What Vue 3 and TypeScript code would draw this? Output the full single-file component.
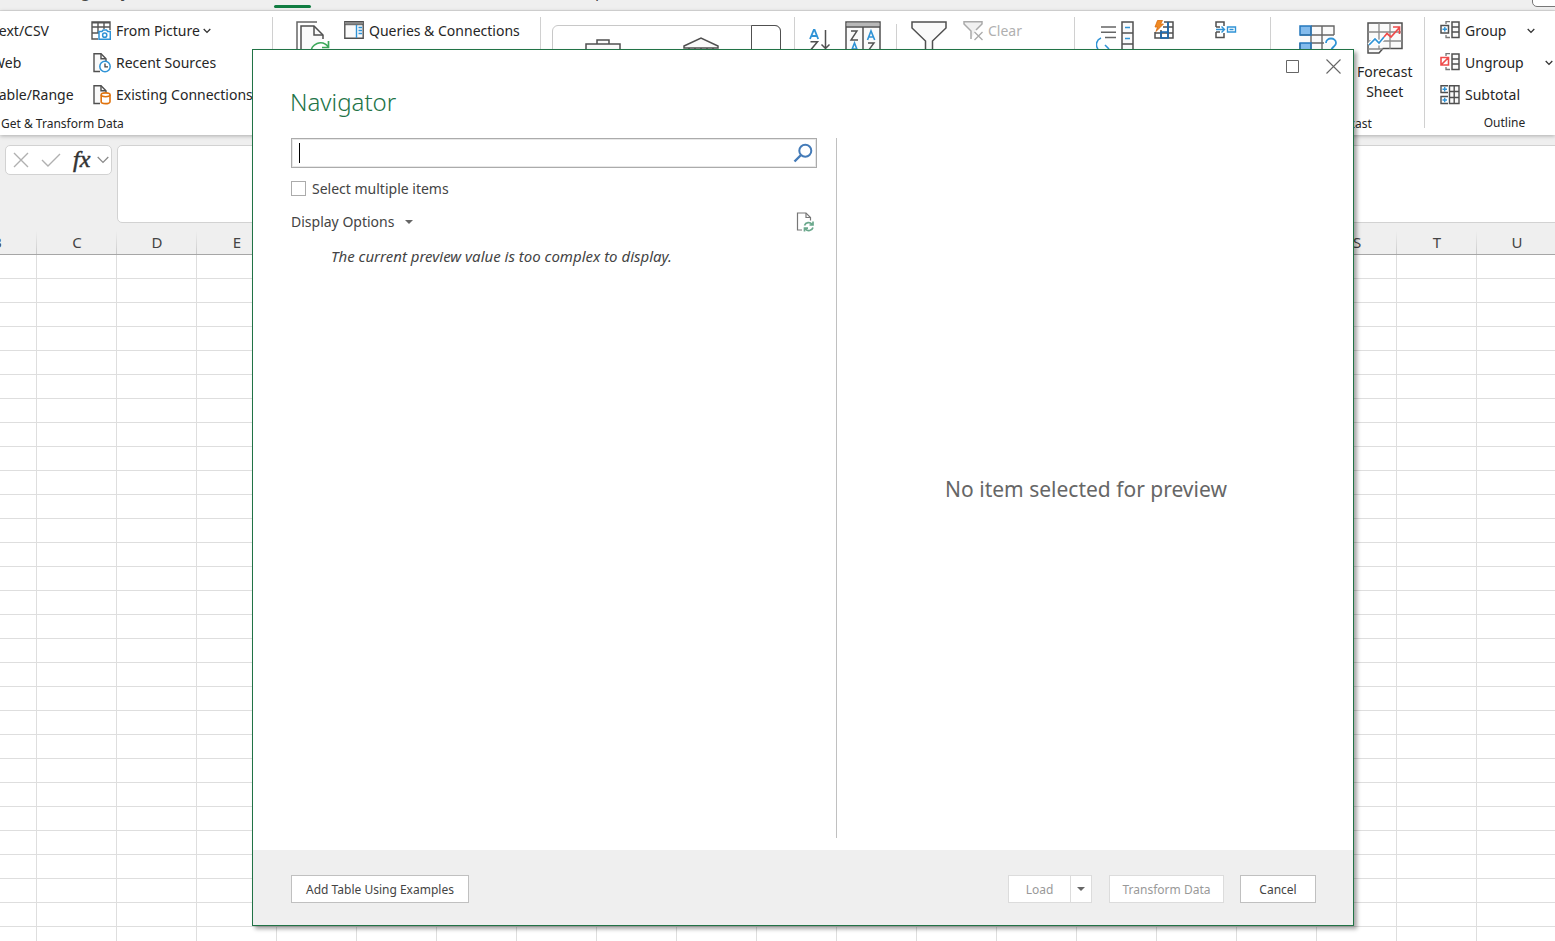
<script setup lang="ts">
import { ref } from 'vue'

const query = ref('')
const multiple = ref(false)
const columns: string[] = 'BCDEFGHIJKLMNOPQRSTU'.split('')
const rowCount = 29
</script>

<template>
  <div class="excel">
    <nav class="tabs" aria-label="Ribbon tabs">
      <a class="tab tab-layout" href="#layout">Page Layout</a>
      <a class="tab-active" href="#data" aria-label="Data"></a>
      <a class="tab tab-help" href="#help">Help</a>
      <button class="comments" type="button" aria-label="Comments"></button>
    </nav>

    <div class="ribbon">
      <section class="group g-get">
        <div class="tools">
          <div class="stack sources">
            <button type="button">Text/CSV</button>
            <button type="button">Web</button>
            <button type="button">Table/Range</button>
          </div>
          <div class="stack">
            <button type="button">
              <svg width="20" height="20" viewBox="0 0 20 20" fill="none">
                <path d="M7 18H1V1H19V9M1 6H19M1 12H8M7 1V12M13 1V8" stroke="#555" stroke-width="1.4" />
                <path d="M1 1.7H19" stroke="#555" stroke-width="1.6" />
                <path d="M8 10.5H11L12.2 9H15.5L16.7 10.5H19.3V18.3H8Z" fill="#fff" stroke="#2f93d6" stroke-width="1.5" />
                <circle cx="13.7" cy="14.2" r="2.1" stroke="#2f93d6" stroke-width="1.5" />
              </svg>
              <span>From Picture</span>
              <svg class="chev" width="8" height="6" viewBox="0 0 8 6" fill="none"><path d="M.7 1L4 4.4L7.3 1" stroke="#333" stroke-width="1.3" /></svg>
            </button>
            <button type="button">
              <svg width="20" height="20" viewBox="0 0 20 20" fill="none">
                <path d="M9 18.5H3V.7H10L15 5.7V8" fill="#fafafa" stroke="#505050" stroke-width="1.4" />
                <path d="M10 .7V5.7H15" stroke="#505050" stroke-width="1.4" />
                <circle cx="14" cy="13.5" r="5.2" fill="#fff" stroke="#2f93d6" stroke-width="1.5" />
                <path d="M14 10.5V13.8H17" stroke="#444" stroke-width="1.3" />
              </svg>
              <span>Recent Sources</span>
            </button>
            <button type="button">
              <svg width="20" height="20" viewBox="0 0 20 20" fill="none">
                <path d="M9 18.5H3V.7H10L15 5.7V8" fill="#fafafa" stroke="#505050" stroke-width="1.4" />
                <path d="M10 .7V5.7H15" stroke="#505050" stroke-width="1.4" />
                <path d="M10.2 9.8V16.8C10.2 19.2 19 19.2 19 16.8V9.8" fill="#fff" stroke="#e0730e" stroke-width="1.6" />
                <ellipse cx="14.6" cy="9.8" rx="4.4" ry="1.9" fill="#fff" stroke="#e0730e" stroke-width="1.6" />
              </svg>
              <span>Existing Connections</span>
            </button>
          </div>
        </div>
        <h2>Get &amp; Transform Data</h2>
      </section>

      <section class="group g-queries">
        <div class="tools">
          <button class="big" type="button" aria-label="Refresh All">
            <svg width="34" height="36" viewBox="0 0 34 36" fill="none">
              <path d="M1 34V1H21" stroke="#666" stroke-width="1.5" />
              <path d="M5 34V5H18L27 14V18" fill="#fafafa" stroke="#505050" stroke-width="1.5" />
              <path d="M18 5V14H27" stroke="#505050" stroke-width="1.5" />
              <path d="M15 32A9.5 9.5 0 0 1 32 25.5M32.5 20V26.5H26" stroke="#3ca85a" stroke-width="1.7" />
            </svg>
          </button>
          <div class="stack">
            <button type="button">
              <svg width="20" height="20" viewBox="0 0 20 20" fill="none">
                <path d="M.8 .8H19.2V17.2H.8Z" fill="#fafafa" stroke="#505050" stroke-width="1.4" />
                <path d="M1 2H19" stroke="#888" stroke-width="2" />
                <path d="M1 3.7H19" stroke="#505050" />
                <path d="M12.5 4V17M14.5 6.5H18M14.5 9.5H18M14.5 12.5H18" stroke="#2f93d6" stroke-width="1.4" />
              </svg>
              <span>Queries &amp; Connections</span>
            </button>
          </div>
        </div>
      </section>

      <section class="group g-types">
        <div class="gallery">
          <button type="button" aria-label="Organization">
            <svg width="36" height="30" viewBox="0 0 36 30" fill="none">
              <path d="M12 5V1H24V5M1 26V5H35V26Z" fill="#fafafa" stroke="#505050" stroke-width="1.5" />
            </svg>
          </button>
          <button class="bank" type="button" aria-label="Stocks">
            <svg width="36" height="30" viewBox="0 0 36 30" fill="none">
              <path d="M1 9L18 1L35 9V11H1Z" fill="#fafafa" stroke="#505050" stroke-width="1.5" />
              <path d="M6 11V26M12 11V26M18 11V26M24 11V26M30 11V26" stroke="#505050" stroke-width="1.5" />
            </svg>
          </button>
          <button class="more" type="button" aria-label="More data types"></button>
        </div>
      </section>

      <section class="group g-sort">
        <div class="tools">
          <button class="big" type="button" aria-label="Sort A to Z">
            <svg width="22" height="36" viewBox="0 0 22 36" fill="none">
              <path d="M1 18L4.8 9H5.6L9.2 18M2.5 15H8" stroke="#2f93d6" stroke-width="1.8" />
              <path d="M1.5 20.8H8.5L1.5 29.2H9" stroke="#505050" stroke-width="1.5" />
              <path d="M16.5 9V27.5M12.5 23.5L16.5 27.5L20.5 23.5" stroke="#505050" stroke-width="1.5" />
            </svg>
          </button>
          <button class="big sort" type="button" aria-label="Sort">
            <svg width="36" height="36" viewBox="0 0 36 36" fill="none">
              <path d="M1 1H35V35H1Z" fill="#fafafa" stroke="#505050" stroke-width="1.5" />
              <path d="M1.7 3.6H34.3" stroke="#b8b8b8" stroke-width="3.6" />
              <path d="M1 6H35M18 6V35" stroke="#505050" stroke-width="1.5" />
              <path d="M6 10H12L6 19H13M23 22H29L23 30H29" stroke="#505050" stroke-width="1.4" />
              <path d="M22.5 19L26 10L29.7 19M23.7 16H28.5M6 31L9.5 22L13 31M7 28H12" stroke="#2f93d6" stroke-width="1.6" />
            </svg>
          </button>
          <i class="rule"></i>
          <button class="big" type="button" aria-label="Filter">
            <svg width="36" height="36" viewBox="0 0 36 36" fill="none">
              <path d="M1 1H35V7L21.5 20V35L14.5 31V20L1 7Z" fill="#fafafa" stroke="#505050" stroke-width="1.5" />
            </svg>
          </button>
          <div class="stack clear">
            <button type="button" disabled>
              <svg width="20" height="20" viewBox="0 0 20 20" fill="none">
                <path d="M8 18V10L1 3V.7H19V3L13 9" fill="#f1f1f1" stroke="#aaa" stroke-width="1.5" />
                <path d="M11.5 11L19.5 19M19.5 11L11.5 19" stroke="#aaa" stroke-width="1.3" />
              </svg>
              <span>Clear</span>
            </button>
          </div>
        </div>
      </section>

      <section class="group g-data">
        <div class="tools">
          <button class="big" type="button" aria-label="Text to Columns">
            <svg width="38" height="36" viewBox="0 0 38 36" fill="none">
              <path d="M5 6H20M5 11.3H20M9 16.5H20" stroke="#666" stroke-width="1.5" />
              <path d="M5 17A7 7 0 0 0 2 28M9 24L13 28" stroke="#2f93d6" stroke-width="1.6" />
              <path d="M26 1H37V35H26ZM26 12H37M26 23H37" fill="#fafafa" stroke="#505050" stroke-width="1.5" />
              <path d="M29 6.5H34M29 17.5H34" stroke="#2f93d6" stroke-width="1.5" />
            </svg>
          </button>
          <button class="mini" type="button" aria-label="Flash Fill">
            <svg width="20" height="20" viewBox="0 0 20 20" fill="none">
              <path d="M10 2H19V18H1V12M1 13H19M9 7H19M7 10V18M14 2V18" stroke="#505050" stroke-width="1.5" />
              <path d="M7 12H14V18H7ZM14 2V18" stroke="#1769b5" stroke-width="1.6" />
              <path d="M3.5 .5H8.5L6.5 4H9.5L2 11.5L3.5 7H1Z" fill="#f08a24" stroke="#d96b0b" stroke-width=".8" />
            </svg>
          </button>
          <button class="mini" type="button" aria-label="Consolidate">
            <svg width="22" height="20" viewBox="0 0 22 20" fill="none">
              <path d="M1 7V2H9V6M9 13V17.5H1V12M1 7H5M1 12H5" stroke="#505050" stroke-width="1.5" />
              <path d="M1 9.5H9.5M6.5 6.5L9.5 9.5L6.5 12.5M12.5 7H20.5V12H12.5ZM14.5 9.5H18.5" stroke="#2f93d6" stroke-width="1.4" />
            </svg>
          </button>
        </div>
      </section>

      <section class="group g-forecast">
        <div class="tools">
          <button class="big low" type="button" aria-label="What-If Analysis">
            <svg width="40" height="36" viewBox="0 0 40 36" fill="none">
              <path d="M1 4H35V30H1Z" fill="#fafafa" />
              <path d="M1 4H12V13H1ZM1 21H12V30H1Z" fill="#83bbec" />
              <path d="M12 4H35V13M1 13H35M12 21H25M23 4V30M12 4V30M1 21V30" stroke="#666" stroke-width="1.4" />
              <path d="M1 4H12V13H1ZM1 21H12V30H1Z" stroke="#2478bd" stroke-width="1.5" />
              <path d="M27 21C27 15 37 15 37 21C37 25 32 24 32 30" stroke="#fff" stroke-width="4" />
              <path d="M27 21C27 15 37 15 37 21C37 25 32 24 32 30" stroke="#2f93d6" stroke-width="1.8" />
            </svg>
          </button>
          <button class="big low forecast" type="button">
            <svg width="36" height="34" viewBox="0 0 36 34" fill="none">
              <path d="M1 1H35V26.5H16L12 31H1Z" fill="#fafafa" stroke="#505050" stroke-width="1.5" />
              <path d="M1 10H35M1 19H35M12 1V27M23 1V27M1 27H16" stroke="#8a8a8a" stroke-width="1.3" />
              <path d="M2 23L8 17L12 21L19 13.5" stroke="#fff" stroke-width="4" />
              <path d="M2 23L8 17L12 21L17 15" stroke="#2f93d6" stroke-width="1.7" />
              <path d="M17 15L20 11.5L24 15L32 6M26 5H32.5V12" stroke="#ee4b4b" stroke-width="1.7" />
            </svg>
            <span>Forecast<br />Sheet</span>
          </button>
        </div>
        <h2>Forecast</h2>
      </section>

      <section class="group g-outline">
        <div class="stack">
          <button type="button">
            <svg width="20" height="20" viewBox="0 0 20 20" fill="none">
              <path d="M12 1H19V16.5H12ZM12 6H19M12 11H19" fill="#fafafa" stroke="#505050" stroke-width="1.5" />
              <path d="M10 .7H6V3M6 14V16.5H10" stroke="#777" stroke-width="1.3" />
              <path d="M1 4.5H8.5V12H1Z" fill="#fff" stroke="#505050" stroke-width="1.5" />
              <path d="M4.8 6V10.6M2.5 8.3H7" stroke="#2f93d6" stroke-width="1.4" />
            </svg>
            <span>Group</span>
            <svg class="drop" width="8" height="6" viewBox="0 0 8 6" fill="none"><path d="M.7 1L4 4.4L7.3 1" stroke="#333" stroke-width="1.3" /></svg>
          </button>
          <button type="button">
            <svg width="20" height="20" viewBox="0 0 20 20" fill="none">
              <path d="M12 1H19V16.5H12ZM12 6H19M12 11H19" fill="#fafafa" stroke="#505050" stroke-width="1.5" />
              <path d="M10 .7H6V3M6 14V16.5H10" stroke="#777" stroke-width="1.3" />
              <path d="M1 4.5H8.5V12H1ZM1 12L8.5 4.5" fill="#fff" stroke="#ee4b4b" stroke-width="1.6" />
            </svg>
            <span>Ungroup</span>
            <svg class="drop" width="8" height="6" viewBox="0 0 8 6" fill="none"><path d="M.7 1L4 4.4L7.3 1" stroke="#333" stroke-width="1.3" /></svg>
          </button>
          <button type="button">
            <svg width="20" height="20" viewBox="0 0 20 20" fill="none">
              <path d="M9.5 .7H19V18.5H9.5ZM9.5 6.5H19M9.5 12.5H19M14.2 1V18" fill="#fafafa" stroke="#505050" stroke-width="1.4" />
              <path d="M8 .7H1V7.5H8M8 11.5H1V18.5H8" stroke="#505050" stroke-width="1.4" />
              <path d="M4.7 2V6.5M2.5 4.2H7M4.7 12.8V17.3M2.5 15H7" stroke="#2f93d6" stroke-width="1.4" />
            </svg>
            <span>Subtotal</span>
          </button>
        </div>
        <h2>Outline</h2>
      </section>
    </div>

    <div class="formula">
      <div class="fx-box">
        <button type="button" aria-label="Cancel entry">
          <svg width="16" height="16" viewBox="0 0 16 16" fill="none"><path d="M1 1L15 15M15 1L1 15" stroke="#b0b0b0" stroke-width="1.4" /></svg>
        </button>
        <button class="confirm" type="button" aria-label="Confirm entry">
          <svg width="20" height="16" viewBox="0 0 20 16" fill="none"><path d="M1 8L7 14L19 2" stroke="#b0b0b0" stroke-width="1.4" /></svg>
        </button>
        <button class="fx" type="button">fx</button>
        <button class="functions" type="button" aria-label="Functions">
          <svg width="12" height="8" viewBox="0 0 12 8" fill="none"><path d="M.7 1L6 6.5L11.3 1" stroke="#888" stroke-width="1.2" /></svg>
        </button>
      </div>
      <textarea class="formula-input" aria-label="Formula bar"></textarea>
    </div>

    <div class="sheet">
      <table>
        <thead>
          <tr><th v-for="c in columns" :key="c" scope="col">{{ c }}</th></tr>
        </thead>
        <tbody>
          <tr v-for="r in rowCount" :key="r"><td v-for="c in columns" :key="c"></td></tr>
        </tbody>
      </table>
    </div>

    <div class="dialog" role="dialog" aria-labelledby="navigator-title">
      <div class="caption">
        <button type="button" aria-label="Maximize">
          <svg width="13" height="13" viewBox="0 0 13 13" fill="none"><path d="M.5 .5H12.5V12.5H.5Z" stroke="#666" /></svg>
        </button>
        <button type="button" aria-label="Close">
          <svg width="15" height="15" viewBox="0 0 15 15" fill="none"><path d="M.5 .5L14.5 14.5M14.5 .5L.5 14.5" stroke="#666" stroke-width="1.1" /></svg>
        </button>
      </div>
      <h1 id="navigator-title">Navigator</h1>
      <div class="panes">
        <div class="left">
          <div class="search">
            <input v-model="query" type="text" aria-label="Search" />
            <i class="caret"></i>
            <button type="button" aria-label="Search">
              <svg width="20" height="20" viewBox="0 0 20 20" fill="none">
                <circle cx="12.3" cy="7.7" r="6" stroke="#447bb8" stroke-width="2" />
                <path d="M8 12L1.5 18.5" stroke="#447bb8" stroke-width="2.4" />
              </svg>
            </button>
          </div>
          <label class="check"><input v-model="multiple" type="checkbox" />Select multiple items</label>
          <div class="options">
            <button type="button">Display Options<i class="tri"></i></button>
            <button type="button" aria-label="Refresh">
              <svg width="18" height="20" viewBox="0 0 18 20" fill="none">
                <path d="M6 18H1.5V1H10L14.5 5.5V8.5" stroke="#777" stroke-width="1.2" />
                <path d="M10 1V5.5H14.5" stroke="#777" stroke-width="1.2" />
                <path d="M8.5 13.5A4.3 4.3 0 0 1 16 12.3M17 9.5V13H13.5M17 15.5A4.3 4.3 0 0 1 9.5 17M8.5 19.5V16.2H12" stroke="#6aa88c" stroke-width="1.7" />
              </svg>
            </button>
          </div>
          <p class="notice">The current preview value is too complex to display.</p>
        </div>
        <div class="preview">No item selected for preview</div>
      </div>
      <footer>
        <button type="button">Add Table Using Examples</button>
        <div class="split">
          <button type="button" disabled>Load</button>
          <button type="button" disabled aria-label="Load options"><i class="tri"></i></button>
        </div>
        <button class="transform" type="button" disabled>Transform Data</button>
        <button class="cancel" type="button">Cancel</button>
      </footer>
    </div>
  </div>
</template>

<style>
html, body { overflow: hidden; }
</style>

<style scoped>
* { box-sizing: border-box; }
.excel {
  position: relative;
  display: flex;
  flex-direction: column;
  height: 100vh;
  overflow: hidden;
  background: #fff;
  color: #262626;
  font: 14px/20px "Noto Sans", "Open Sans", sans-serif;
}
button { margin: 0; padding: 0; border: 0; background: none; color: inherit; font: inherit; }
svg { display: block; flex: none; }
h1, h2, p { margin: 0; font-weight: 400; }

.tabs {
  display: flex;
  flex: none;
  align-items: flex-end;
  height: 11px;
  overflow: hidden;
  background: #efefef;
  border-bottom: 1px solid #dcdcdc;
}
.tab { color: #444; text-decoration: none; font-size: 16px; line-height: 20px; margin-bottom: 9px; white-space: nowrap; }
.tab-layout { width: 218px; padding-left: 62px; }
.tab-active { width: 37px; height: 3px; margin: 0 0 2px 56px; border-radius: 2px; background: #107c41; }
.tab-help { margin-left: 259px; }
.comments {
  width: 32px;
  height: 16px;
  margin: 0 -9px 3px auto;
  flex: none;
  border: 1px solid #777;
  border-radius: 5px;
  background: #fff;
}

.ribbon {
  position: relative;
  z-index: 1;
  display: flex;
  flex: none;
  height: 124px;
  background: #fff;
  box-shadow: 0 1px 4px rgba(0, 0, 0, .28);
}
.group { position: relative; display: flex; flex: none; flex-direction: column; padding-top: 4px; }
.group::after {
  content: "";
  position: absolute;
  top: 6px;
  right: 0;
  bottom: 7px;
  width: 1px;
  background: #d0d0d0;
}
.group h2 { margin-top: auto; padding-bottom: 2px; font-size: 12px; line-height: 18px; text-align: center; }
.tools { display: flex; align-items: flex-start; }
.stack button { display: flex; align-items: center; gap: 5px; height: 32px; white-space: nowrap; }
.stack .chev { margin-left: -2px; }
.big { padding-top: 6px; flex: none; }
.big.low { padding-top: 7px; }
.mini { padding-top: 5px; }
.g-get { width: 273px; }
.g-get h2 { padding-left: 1px; text-align: left; }
.sources { width: 99px; margin-left: -8px; }
.g-queries { width: 268px; padding-left: 23px; }
.g-queries .tools { gap: 14px; }
.g-types { width: 254px; padding-left: 11px; }
.gallery {
  display: flex;
  align-items: flex-start;
  width: 229px;
  height: 76px;
  margin-top: 10px;
  padding-left: 32px;
  border: 1px solid #c8c8c8;
  border-radius: 6px;
}
.gallery button { padding-top: 13px; margin-right: 62px; }
.gallery .bank { padding-top: 11px; margin-right: 0; }
.gallery .more { flex: none; width: 30px; height: 76px; margin: -1px -1px 0 auto; border: 1px solid #505050; border-radius: 0 6px 6px 0; }
.g-sort { width: 280px; padding-left: 14px; }
.sort { margin-left: 14px; }
.rule { width: 1px; height: 94px; margin: 9px 14px 0 15px; background: #d0d0d0; }
.clear { margin-left: 16px; color: #b0b0b0; }
.g-data { width: 196px; padding-left: 21px; }
.g-data .mini { margin-left: 20px; }
.g-data .mini + .mini { margin-left: 41px; }
.g-forecast { width: 154px; padding-left: 28px; }
.g-forecast h2 { margin-left: -28px; }
.forecast { display: flex; flex-direction: column; align-items: center; gap: 6px; margin-left: 18px; }
.g-outline { flex: 1; padding-left: 15px; }
.g-outline::after { display: none; }
.g-outline h2 { margin-left: -15px; padding: 0 0 3px 29px; }
.g-outline .drop { margin-left: 16px; }

.formula {
  display: flex;
  flex: none;
  align-items: flex-start;
  gap: 5px;
  height: 96px;
  padding: 10px 0 0 5px;
  background: #efefef;
}
.fx-box {
  display: flex;
  align-items: center;
  width: 107px;
  height: 30px;
  padding: 0 2px 0 7px;
  border: 1px solid #d2d2d2;
  border-radius: 5px;
  background: #fff;
}
.confirm { margin-left: 12px; }
.fx { margin-left: 12px; padding-bottom: 3px; font: italic 24px/24px "Liberation Serif", serif; color: #333; -webkit-text-stroke: thin #333; }
.functions { margin-left: auto; }
.formula-input {
  flex: 1;
  height: 78px;
  margin-right: -8px;
  border: 1px solid #d2d2d2;
  border-radius: 5px;
  background: #fff;
  resize: none;
}

.sheet { flex: 1; min-height: 0; overflow: hidden; }
table { width: 1600px; margin-left: -43px; border-spacing: 0; table-layout: fixed; }
th {
  height: 24px;
  padding: 0 0 1px;
  border-bottom: 1px solid #a6a6a6;
  background: linear-gradient(#efefef, #cacaca) right / 1px 100% no-repeat, #efefef;
  color: #444;
  font-size: 15px;
  font-weight: 400;
  line-height: 20px;
}
td { height: 24px; padding: 0; border-right: 1px solid #dedede; border-bottom: 1px solid #dedede; }

.dialog {
  position: absolute;
  z-index: 2;
  inset: 49px 201px 15px 252px;
  display: flex;
  flex-direction: column;
  border: 1px solid #217346;
  background: #fff;
  color: #444;
  box-shadow: 3px 3px 4px rgba(0, 0, 0, .35);
}
.caption { display: flex; justify-content: flex-end; align-items: center; gap: 27px; height: 33px; padding-right: 12px; }
h1 { height: 55px; padding-left: 37px; color: #217346; font-size: 24px; font-weight: 300; line-height: 38px; }
.panes { display: grid; grid-template-columns: 53fr 47fr; flex: 1; min-height: 0; margin-bottom: 12px; }
.left { padding: 0 19px 0 38px; }
.search { position: relative; display: flex; height: 30px; border: 1px solid #ababab; box-shadow: inset 0 0 0 1px #e8e8e8; }
.search input { flex: 1; min-width: 0; padding: 0 8px; border: 0; outline: 0; background: none; font: inherit; }
.search button { padding: 0 3px; }
.caret { position: absolute; top: 4px; left: 7px; width: 1px; height: 20px; background: #000; }
.check { display: flex; align-items: center; gap: 6px; height: 19px; margin-top: 11px; }
.check input { appearance: none; width: 15px; height: 15px; margin: 0; border: 1px solid #ababab; background: #fff; }
.options { display: flex; justify-content: space-between; align-items: center; height: 20px; margin: 14px 3px 0 0; }
.options button { display: flex; align-items: center; gap: 11px; }
.tri { border: 4px solid transparent; border-top-color: #666; border-bottom: 0; }
.notice { margin: 14px 0 0 40px; font-size: 15px; font-style: italic; }
.preview {
  display: flex;
  align-items: center;
  justify-content: center;
  padding: 2px 18px 0 0;
  border-left: 1px solid #c0c0c0;
  color: #666;
  font-size: 21px;
  line-height: 30px;
}
footer { display: flex; flex: none; align-items: center; height: 75px; padding: 2px 37px 0 38px; background: #efefef; font-size: 12px; }
footer button { height: 28px; padding: 2px 11px 0; border: 1px solid #c0c0c0; background: #fff; white-space: nowrap; }
footer button:disabled { border-color: #dcdcdc; color: #999; }
footer > button:first-child { width: 178px; }
.split { display: flex; margin-left: auto; }
.split button:first-child { width: 63px; }
.split button:last-child { width: 22px; margin-left: -1px; padding: 0; display: flex; align-items: center; justify-content: center; }
.transform { width: 115px; margin: 0 16px 0 17px; }
.cancel { width: 76px; }
</style>
